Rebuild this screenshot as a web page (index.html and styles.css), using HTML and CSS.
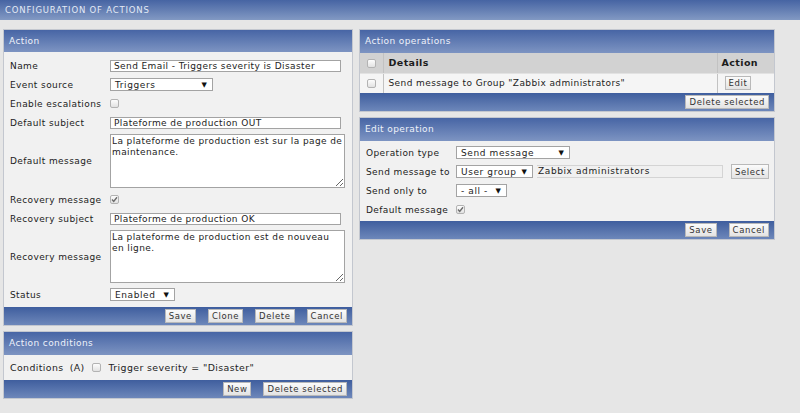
FILE: index.html
```html
<!DOCTYPE html>
<html>
<head>
<meta charset="utf-8">
<link rel="stylesheet" href="styles.css">
</head>
<body>
<div class="topbar">CONFIGURATION OF ACTIONS</div>
<div class="main">
  <div class="col col-left">
    <section class="panel">
      <div class="panel-head">Action</div>
      <div class="form">
        <div class="row"><span class="label">Name</span><input class="input w-name" value="Send Email - Triggers severity is Disaster"></div>
        <div class="row"><span class="label">Event source</span><span class="select w-event"><span>Triggers</span><span class="arrow">▼</span></span></div>
        <div class="row"><span class="label">Enable escalations</span><span class="cb"></span></div>
        <div class="row"><span class="label">Default subject</span><input class="input w-name" value="Plateforme de production OUT"></div>
        <div class="row"><span class="label">Default message</span><textarea class="textarea">La plateforme de production est sur la page de maintenance.</textarea></div>
        <div class="row"><span class="label">Recovery message</span><span class="cb checked"><svg viewBox="0 0 9 9" width="9" height="9"><path d="M2 4.6 L3.7 6.4 L7 2.2" fill="none" stroke="#6b6b6b" stroke-width="1.4"/></svg></span></div>
        <div class="row"><span class="label">Recovery subject</span><input class="input w-name" value="Plateforme de production OK"></div>
        <div class="row"><span class="label">Recovery message</span><textarea class="textarea tall2">La plateforme de production est de nouveau en ligne.</textarea></div>
        <div class="row"><span class="label">Status</span><span class="select w-status"><span>Enabled</span><span class="arrow">▼</span></span></div>
      </div>
      <div class="panel-foot">
        <button class="btn">Save</button>
        <button class="btn">Clone</button>
        <button class="btn">Delete</button>
        <button class="btn">Cancel</button>
      </div>
    </section>
    <section class="panel">
      <div class="panel-head tall">Action conditions</div>
      <div class="cond-row">
        <span class="cond-label">Conditions</span><span class="cond-a">(A)</span><span class="cb"></span><span class="cond-text">Trigger severity = "Disaster"</span>
      </div>
      <div class="panel-foot">
        <button class="btn">New</button>
        <button class="btn">Delete selected</button>
      </div>
    </section>
  </div>
  <div class="col col-right">
    <section class="panel">
      <div class="panel-head tall">Action operations</div>
      <table class="ops">
        <tr>
          <th class="c-cb"><span class="cb"></span></th>
          <th class="c-det">Details</th>
          <th class="c-act">Action</th>
        </tr>
        <tr>
          <td class="c-cb"><span class="cb"></span></td>
          <td class="c-det">Send message to Group "Zabbix administrators"</td>
          <td class="c-act"><button class="btn">Edit</button></td>
        </tr>
      </table>
      <div class="panel-foot">
        <button class="btn">Delete selected</button>
      </div>
    </section>
    <section class="panel">
      <div class="panel-head tall">Edit operation</div>
      <div class="form form-op">
        <div class="row"><span class="label label-op">Operation type</span><span class="select w-optype"><span>Send message</span><span class="arrow">▼</span></span></div>
        <div class="row"><span class="label label-op">Send message to</span><span class="select w-group"><span>User group</span><span class="arrow">▼</span></span><span class="ro">Zabbix administrators</span><button class="btn btn-select">Select</button></div>
        <div class="row"><span class="label label-op">Send only to</span><span class="select w-only"><span>- all -</span><span class="arrow">▼</span></span></div>
        <div class="row"><span class="label label-op">Default message</span><span class="cb checked"><svg viewBox="0 0 9 9" width="9" height="9"><path d="M2 4.6 L3.7 6.4 L7 2.2" fill="none" stroke="#6b6b6b" stroke-width="1.4"/></svg></span></div>
      </div>
      <div class="panel-foot">
        <button class="btn">Save</button>
        <button class="btn">Cancel</button>
      </div>
    </section>
  </div>
</div>
</body>
</html>
```
FILE: styles.css
```css
* { box-sizing: border-box; }

body {
  margin: 0;
  background: #e6e6e6;
  font-family: "DejaVu Sans", Verdana, sans-serif;
  font-size: 9px;
  letter-spacing: 0.4px;
  color: #1c1c1c;
}

.topbar {
  height: 20px;
  background: linear-gradient(#4664a3, #8299c3);
  color: #e4eaf6;
  font-size: 8.5px;
  letter-spacing: 0.8px;
  line-height: 20px;
  padding-left: 5px;
}

.main {
  display: flex;
  align-items: flex-start;
  gap: 6px;
  padding: 9px 0 0 3px;
}

.col {
  display: flex;
  flex-direction: column;
  gap: 5px;
}

.col-left { width: 350px; }
.col-right { width: 416px; }

.panel {
  border: 1px solid #c3c7cf;
  background: #f1f1f1;
}

.panel-head {
  height: 22px;
  line-height: 22px;
  padding-left: 5px;
  background: linear-gradient(#4765a5, #7d94c2);
  color: #eef2fa;
}

.panel-head.tall {
  height: 23px;
  line-height: 23px;
}

.panel-foot {
  height: 18px;
  display: flex;
  justify-content: flex-end;
  align-items: center;
  gap: 12px;
  padding-right: 5px;
  background: linear-gradient(#3f5e9e, #6d87ba);
}

.btn {
  height: 14px;
  padding: 0 3px;
  margin: 0;
  border: 1px solid #b9b9b9;
  border-radius: 0;
  background: linear-gradient(#fbfbfb, #e3e3e3);
  font-family: inherit;
  font-size: 8.5px;
  letter-spacing: 0.6px;
  line-height: 12px;
  color: #333;
}

.form {
  padding: 4px 0 3px;
}

.form-op {
  padding: 2px 0 2px;
}

.row {
  display: flex;
  align-items: center;
  min-height: 19px;
}

.label {
  flex: none;
  width: 106px;
  padding-left: 6px;
}

.label-op {
  width: 96px;
  padding-left: 6px;
}

.input {
  height: 12px;
  margin: 0;
  padding: 0 3px;
  border: 1px solid #a3a3a3;
  background: #fff;
  font-family: inherit;
  font-size: 9px;
  letter-spacing: 0.4px;
  line-height: 10px;
  color: #1c1c1c;
}

.w-name { width: 231px; }

.textarea {
  width: 235px;
  height: 54px;
  margin: 2px 0;
  padding: 1px 1px;
  border: 1px solid #a3a3a3;
  background: #fff;
  font-family: inherit;
  font-size: 9px;
  letter-spacing: 0.4px;
  line-height: 11px;
  color: #1c1c1c;
  overflow: hidden;
}

.textarea.tall2 { height: 53px; }

.select {
  display: inline-flex;
  justify-content: space-between;
  align-items: center;
  height: 13px;
  padding: 0 5px 0 4px;
  border: 1px solid #a3a3a3;
  background: #fff;
  letter-spacing: 0.6px;
}

.arrow {
  font-size: 7px;
  letter-spacing: 0;
  color: #111;
}

.w-event { width: 103px; }
.w-status { width: 65px; }
.w-optype { width: 114px; }
.w-group { width: 77px; }
.w-only { width: 51px; }

.ro {
  width: 186px;
  height: 13px;
  margin-left: 4px;
  padding-left: 1px;
  border: 1px solid #d4d4d4;
  border-left: none;
  background: #f0f0f0;
  line-height: 11px;
  letter-spacing: 0.6px;
}

.btn-select {
  margin-left: 8px;
  height: 15px;
}

.cb {
  display: inline-block;
  width: 9px;
  height: 9px;
  border: 1px solid #b3b3b3;
  border-radius: 2px;
  background: linear-gradient(#fdfdfd, #e2e2e2);
  position: relative;
  vertical-align: middle;
}

.cb svg {
  position: absolute;
  left: -1px;
  top: -1px;
}

.cond-row {
  display: flex;
  align-items: center;
  height: 25px;
  padding-left: 6px;
  font-size: 9.4px;
}

.cond-a { margin-left: 6px; margin-right: 7px; }
.cond-text { margin-left: 8px; }

.ops {
  width: 100%;
  border-collapse: collapse;
}

.ops th, .ops td {
  height: 20px;
  padding: 0;
  text-align: left;
  border-right: 1px solid #c2c2c2;
}

.ops th {
  background: #d2d2d2;
  font-weight: bold;
  font-size: 9.5px;
  border-bottom: 1px solid #e2e2e2;
}

.ops td {
  background: #f5f5f5;
}

.ops .c-cb {
  width: 23px;
  text-align: center;
}

.ops .c-det {
  padding-left: 5px;
}

.ops .c-act {
  width: 57px;
  padding-left: 4px;
  border-right: none;
}

.ops td.c-act { padding-left: 7px; }
```
